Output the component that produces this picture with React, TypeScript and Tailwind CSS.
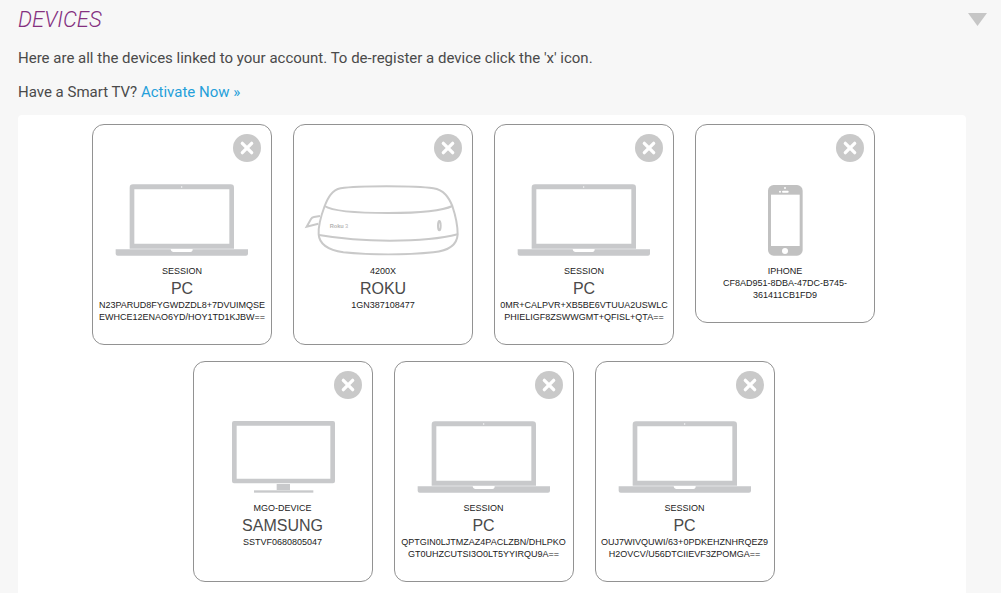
import React from "react";

type DeviceKind = "laptop" | "roku" | "phone" | "tv";

interface Device {
  kind: DeviceKind;
  type: string;
  name?: string;
  id: string[];
}

const devices: Device[] = [
  { kind: "laptop", type: "SESSION", name: "PC", id: ["N23PARUD8FYGWDZDL8+7DVUIMQSE", "EWHCE12ENAO6YD/HOY1TD1KJBW=="] },
  { kind: "roku", type: "4200X", name: "ROKU", id: ["1GN387108477", "\u00a0"] },
  { kind: "laptop", type: "SESSION", name: "PC", id: ["0MR+CALPVR+XB5BE6VTUUA2USWLC", "PHIELIGF8ZSWWGMT+QFISL+QTA=="] },
  { kind: "phone", type: "IPHONE", id: ["CF8AD951-8DBA-47DC-B745-", "361411CB1FD9"] },
  { kind: "tv", type: "MGO-DEVICE", name: "SAMSUNG", id: ["SSTVF0680805047", "\u00a0"] },
  { kind: "laptop", type: "SESSION", name: "PC", id: ["QPTGIN0LJTMZAZ4PACLZBN/DHLPKO", "GT0UHZCUTSI3O0LT5YYIRQU9A=="] },
  { kind: "laptop", type: "SESSION", name: "PC", id: ["OUJ7WIVQUWI/63+0PDKEHZNHRQEZ9", "H2OVCV/U56DTCIIEVF3ZPOMGA=="] },
];

function Laptop() {
  return (
    <svg className="h-18" viewBox="90 192 402 216" aria-hidden="true">
      <path fill="#c8c9cb" fillRule="evenodd" d="M144 193H437Q447 193 447 203V386H134V203Q134 193 144 193ZM148 208V371H433V208Z" />
      <circle cx="290" cy="201" r="2" fill="#fff" />
      <path fill="#c8c9cb" d="M92 388H257Q258 396 264 396H316Q323 396 323 388H489V401Q489 407 483 407H98Q92 407 92 401Z" />
    </svg>
  );
}

function Roku() {
  return (
    <svg className="h-18" viewBox="42 192 474 216" fill="none" stroke="#c9c9c9" strokeWidth="6" aria-hidden="true">
      <path d="M104 258C114 232 126 210 152 205C205 197 375 197 430 205C462 210 476 232 487 258C497 288 503 315 503 343C501 378 468 393 430 397C350 405 240 405 160 397C116 390 88 374 86 343C84 315 94 285 104 258Z" />
      <path d="M104 258C128 274 210 279 295 279C380 279 452 275 487 258" />
      <path d="M87 345C150 356 230 362 300 362C380 362 450 357 503 343" />
      <path d="M90 288L72 291Q66 292 63 297L50 320L85 311" />
      <ellipse cx="448" cy="317" rx="4" ry="14" />
      <g fontSize="17" fontFamily="Liberation Sans, sans-serif" fill="#b5b5b5" stroke="none">
        <text x="119" y="324" fontWeight="bold">Roku</text>
        <text x="165" y="324">3</text>
      </g>
    </svg>
  );
}

function Phone() {
  return (
    <svg className="h-18" viewBox="231 192 108 216" aria-hidden="true">
      <rect x="234" y="195" width="104" height="212" rx="17" fill="#c1c1c1" />
      <g fill="#fff">
        <rect x="243" y="224" width="86" height="154" />
        <circle cx="285" cy="393" r="9" />
        <circle cx="285" cy="204" r="3" />
        <circle cx="270" cy="215" r="3" />
        <rect x="276" y="212" width="20" height="6" rx="3" />
      </g>
    </svg>
  );
}

function Television() {
  return (
    <svg className="h-18" viewBox="135 198 312 216" fill="#c8c9cb" aria-hidden="true">
      <path fillRule="evenodd" d="M144 198H441Q447 198 447 204V379Q447 385 441 385H144Q138 385 138 379V204Q138 198 144 198ZM152 212V371H433V212Z" />
      <rect x="272" y="387" width="40" height="18" />
      <rect x="204" y="406" width="178" height="7" />
    </svg>
  );
}

const drawings: Record<DeviceKind, () => React.ReactElement> = {
  laptop: Laptop,
  roku: Roku,
  phone: Phone,
  tv: Television,
};

function DeviceCard({ device }: { device: Device }) {
  const Drawing = drawings[device.kind];
  return (
    <li className="flex w-45 flex-col items-center rounded-xl border border-[#929292] pt-[9px] pb-[21px] text-center text-[9px] leading-3 text-[#222]">
      <button type="button" aria-label="Remove device" className="mr-[10px] self-end">
        <svg className="size-7" viewBox="443 42 84 84" aria-hidden="true">
          <circle cx="485" cy="84" r="42" fill="#c9c9c9" />
          <path d="M471 70L499 98M499 70L471 98" stroke="#fff" strokeWidth="10" strokeLinecap="round" />
        </svg>
      </button>
      <div className="mt-[22px] mb-[9px]">
        <Drawing />
      </div>
      <p>{device.type}</p>
      {device.name && <h2 className="pt-0.5 text-base leading-5 text-[#4a4a4a]">{device.name}</h2>}
      <p className="whitespace-nowrap">
        {device.id.map((line) => (
          <span key={line} className="block">{line}</span>
        ))}
      </p>
    </li>
  );
}

export default function App() {
  return (
    <main className="min-h-screen bg-[#f7f7f7] pt-2 pl-[18px] font-['Liberation_Sans',Arial,sans-serif] text-[15px] leading-5 text-[#4a4a4a]">
      <header className="flex items-start justify-between pr-[14px]">
        <h1 className="font-[Roboto,'Liberation_Sans',sans-serif] text-[22px] leading-6 font-light text-[#84307f] italic">DEVICES</h1>
        <button type="button" aria-label="Collapse devices" className="pt-[5px]">
          <svg className="h-[13px] w-[19px]" viewBox="0 0 19 13" aria-hidden="true">
            <path d="M0 0H19L9.500 13Z" fill="#c6c6c6" />
          </svg>
        </button>
      </header>
      <div className="mt-4 flex flex-col gap-[14px] font-[Roboto,'Liberation_Sans',sans-serif]">
        <p>Here are all the devices linked to your account. To de-register a device click the 'x' icon.</p>
        <p>
          Have a Smart TV? <a href="#activate" className="text-[#259fda]">Activate Now »</a>
        </p>
      </div>
      <section aria-label="Linked devices" className="mt-[13px] mr-[35px] rounded-t bg-white pt-[9px] pr-[17px] pb-[11px]">
        <ul className="flex flex-wrap items-start justify-center gap-x-[21px] gap-y-4">
          {devices.map((device) => (
            <DeviceCard key={device.id[0]} device={device} />
          ))}
        </ul>
      </section>
    </main>
  );
}
